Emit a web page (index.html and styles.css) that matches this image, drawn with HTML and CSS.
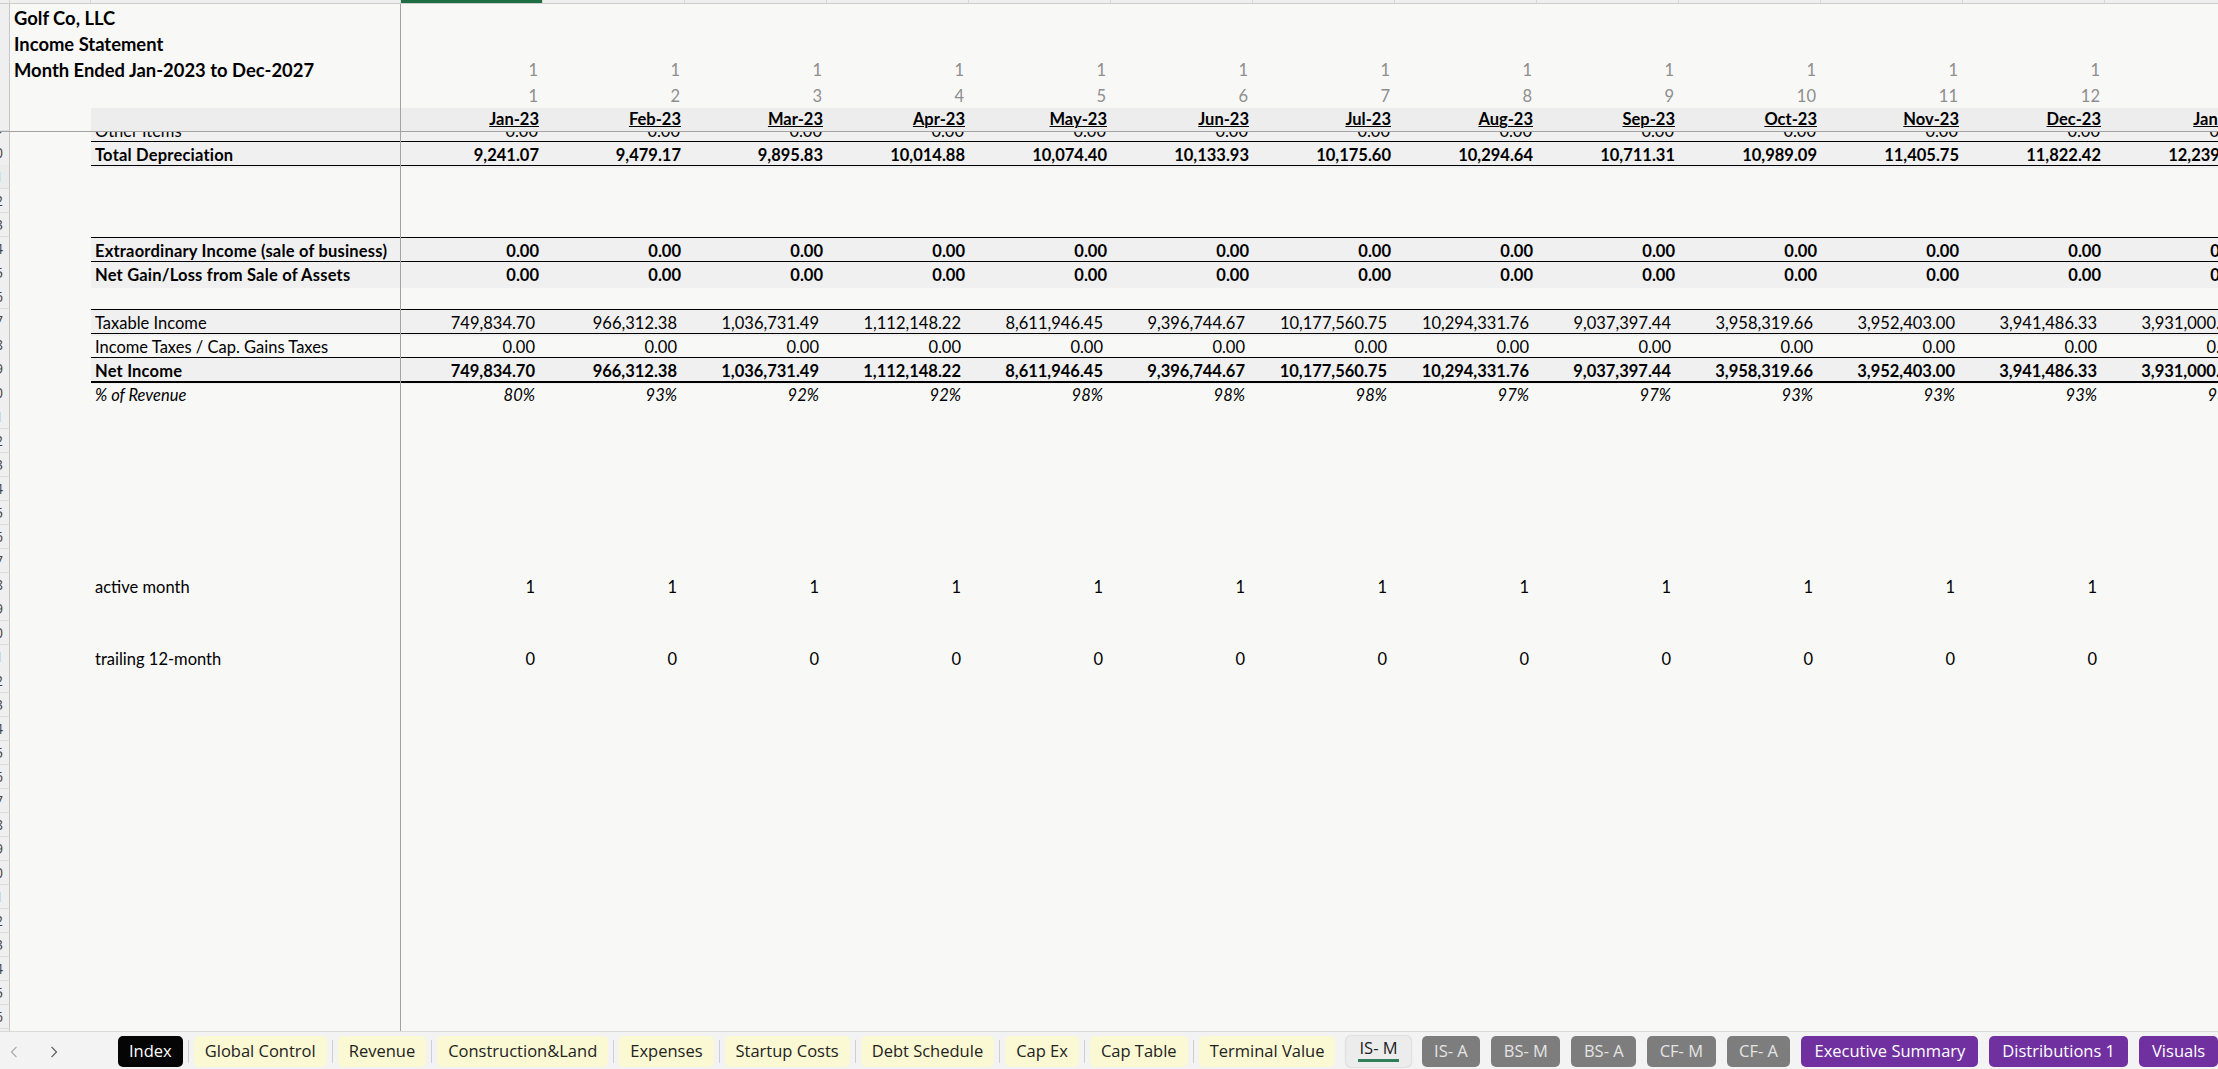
FILE: index.html
```html
<!DOCTYPE html>
<html>
<head>
<meta charset="utf-8">
<title>Golf Co, LLC - Income Statement</title>
<link rel="stylesheet" href="styles.css">
</head>
<body>
<div class="app">
  <div class="colhdr">
    <div class="ch"></div><div class="ch"></div><div class="ch"></div><div class="ch sel"></div><div class="ch"></div><div class="ch"></div><div class="ch"></div><div class="ch"></div><div class="ch"></div><div class="ch"></div><div class="ch"></div><div class="ch"></div><div class="ch"></div><div class="ch"></div><div class="ch"></div><div class="ch"></div>
  </div>
  <div class="sheet">
    <div class="top">
      <div class="row tr"><div class="rh"></div><div class="a title">Golf Co, LLC</div><div class="b"></div></div>
      <div class="row tr"><div class="rh"></div><div class="a title">Income Statement</div><div class="b"></div></div>
      <div class="row tr"><div class="rh"></div><div class="a title">Month Ended Jan-2023 to Dec-2027</div><div class="b"></div>
        <div class="g">1</div><div class="g">1</div><div class="g">1</div><div class="g">1</div><div class="g">1</div><div class="g">1</div><div class="g">1</div><div class="g">1</div><div class="g">1</div><div class="g">1</div><div class="g">1</div><div class="g">1</div><div class="g">2</div></div>
      <div class="row tr"><div class="rh"></div><div class="a"></div><div class="b"></div>
        <div class="g">1</div><div class="g">2</div><div class="g">3</div><div class="g">4</div><div class="g">5</div><div class="g">6</div><div class="g">7</div><div class="g">8</div><div class="g">9</div><div class="g">10</div><div class="g">11</div><div class="g">12</div><div class="g">1</div></div>
      <div class="row hdr bold"><div class="rh"></div><div class="a"></div><div class="b"></div>
        <div class="d u">Jan-23</div><div class="d u">Feb-23</div><div class="d u">Mar-23</div><div class="d u">Apr-23</div><div class="d u">May-23</div><div class="d u">Jun-23</div><div class="d u">Jul-23</div><div class="d u">Aug-23</div><div class="d u">Sep-23</div><div class="d u">Oct-23</div><div class="d u">Nov-23</div><div class="d u">Dec-23</div><div class="d u">Jan-24</div></div>
    </div>

    <div class="clip">
      <div class="row sh"><div class="rh">39</div><div class="a"></div><div class="b">Other Items</div>
        <div class="c">0.00</div><div class="c">0.00</div><div class="c">0.00</div><div class="c">0.00</div><div class="c">0.00</div><div class="c">0.00</div><div class="c">0.00</div><div class="c">0.00</div><div class="c">0.00</div><div class="c">0.00</div><div class="c">0.00</div><div class="c">0.00</div><div class="c">0.00</div></div>
    </div>

    <div class="row sh bt bold"><div class="rh">40</div><div class="a"></div><div class="b">Total Depreciation</div>
      <div class="d">9,241.07</div><div class="d">9,479.17</div><div class="d">9,895.83</div><div class="d">10,014.88</div><div class="d">10,074.40</div><div class="d">10,133.93</div><div class="d">10,175.60</div><div class="d">10,294.64</div><div class="d">10,711.31</div><div class="d">10,989.09</div><div class="d">11,405.75</div><div class="d">11,822.42</div><div class="d">12,239.09</div></div>
    <div class="row bt"><div class="rh hl">41</div><div class="a"></div><div class="b"></div><div class="rest"></div></div>
    <div class="row"><div class="rh">42</div><div class="a"></div><div class="b"></div></div>
    <div class="row"><div class="rh">43</div><div class="a"></div><div class="b"></div></div>
    <div class="row sh bt bold"><div class="rh">44</div><div class="a"></div><div class="b">Extraordinary Income (sale of business)</div>
      <div class="d">0.00</div><div class="d">0.00</div><div class="d">0.00</div><div class="d">0.00</div><div class="d">0.00</div><div class="d">0.00</div><div class="d">0.00</div><div class="d">0.00</div><div class="d">0.00</div><div class="d">0.00</div><div class="d">0.00</div><div class="d">0.00</div><div class="d">0.00</div></div>
    <div class="row sh bt bold"><div class="rh">45</div><div class="a"></div><div class="b">Net Gain/Loss from Sale of Assets</div>
      <div class="d">0.00</div><div class="d">0.00</div><div class="d">0.00</div><div class="d">0.00</div><div class="d">0.00</div><div class="d">0.00</div><div class="d">0.00</div><div class="d">0.00</div><div class="d">0.00</div><div class="d">0.00</div><div class="d">0.00</div><div class="d">0.00</div><div class="d">0.00</div></div>
    <div class="row"><div class="rh">46</div><div class="a"></div><div class="b"></div></div>
    <div class="row sh bt"><div class="rh">47</div><div class="a"></div><div class="b">Taxable Income</div>
      <div class="n">749,834.70</div><div class="n">966,312.38</div><div class="n">1,036,731.49</div><div class="n">1,112,148.22</div><div class="n">8,611,946.45</div><div class="n">9,396,744.67</div><div class="n">10,177,560.75</div><div class="n">10,294,331.76</div><div class="n">9,037,397.44</div><div class="n">3,958,319.66</div><div class="n">3,952,403.00</div><div class="n">3,941,486.33</div><div class="n">3,931,000.00</div></div>
    <div class="row bt"><div class="rh">48</div><div class="a"></div><div class="b">Income Taxes / Cap. Gains Taxes</div>
      <div class="n">0.00</div><div class="n">0.00</div><div class="n">0.00</div><div class="n">0.00</div><div class="n">0.00</div><div class="n">0.00</div><div class="n">0.00</div><div class="n">0.00</div><div class="n">0.00</div><div class="n">0.00</div><div class="n">0.00</div><div class="n">0.00</div><div class="n">0.00</div></div>
    <div class="row sh bt bold"><div class="rh">49</div><div class="a"></div><div class="b">Net Income</div>
      <div class="n">749,834.70</div><div class="n">966,312.38</div><div class="n">1,036,731.49</div><div class="n">1,112,148.22</div><div class="n">8,611,946.45</div><div class="n">9,396,744.67</div><div class="n">10,177,560.75</div><div class="n">10,294,331.76</div><div class="n">9,037,397.44</div><div class="n">3,958,319.66</div><div class="n">3,952,403.00</div><div class="n">3,941,486.33</div><div class="n">3,931,000.00</div></div>
    <div class="row bt2 it"><div class="rh">50</div><div class="a"></div><div class="b">% of Revenue</div>
      <div class="p">80%</div><div class="p">93%</div><div class="p">92%</div><div class="p">92%</div><div class="p">98%</div><div class="p">98%</div><div class="p">98%</div><div class="p">97%</div><div class="p">97%</div><div class="p">93%</div><div class="p">93%</div><div class="p">93%</div><div class="p">93%</div></div>
    <div class="row"><div class="rh">51</div><div class="a"></div><div class="b"></div></div>
    <div class="row"><div class="rh">52</div><div class="a"></div><div class="b"></div></div>
    <div class="row"><div class="rh">53</div><div class="a"></div><div class="b"></div></div>
    <div class="row"><div class="rh">54</div><div class="a"></div><div class="b"></div></div>
    <div class="row"><div class="rh">55</div><div class="a"></div><div class="b"></div></div>
    <div class="row"><div class="rh">56</div><div class="a"></div><div class="b"></div></div>
    <div class="row"><div class="rh">57</div><div class="a"></div><div class="b"></div></div>
    <div class="row"><div class="rh">58</div><div class="a"></div><div class="b">active month</div>
      <div class="n">1</div><div class="n">1</div><div class="n">1</div><div class="n">1</div><div class="n">1</div><div class="n">1</div><div class="n">1</div><div class="n">1</div><div class="n">1</div><div class="n">1</div><div class="n">1</div><div class="n">1</div><div class="n"></div></div>
    <div class="row"><div class="rh">59</div><div class="a"></div><div class="b"></div></div>
    <div class="row"><div class="rh">60</div><div class="a"></div><div class="b"></div></div>
    <div class="row"><div class="rh">61</div><div class="a"></div><div class="b">trailing 12-month</div>
      <div class="n">0</div><div class="n">0</div><div class="n">0</div><div class="n">0</div><div class="n">0</div><div class="n">0</div><div class="n">0</div><div class="n">0</div><div class="n">0</div><div class="n">0</div><div class="n">0</div><div class="n">0</div><div class="n"></div></div>
    <div class="row"><div class="rh">62</div><div class="a"></div><div class="b"></div></div>
    <div class="row"><div class="rh">63</div><div class="a"></div><div class="b"></div></div>
    <div class="row"><div class="rh">64</div><div class="a"></div><div class="b"></div></div>
    <div class="row"><div class="rh">65</div><div class="a"></div><div class="b"></div></div>
    <div class="row"><div class="rh">66</div><div class="a"></div><div class="b"></div></div>
    <div class="row"><div class="rh">67</div><div class="a"></div><div class="b"></div></div>
    <div class="row"><div class="rh">68</div><div class="a"></div><div class="b"></div></div>
    <div class="row"><div class="rh">69</div><div class="a"></div><div class="b"></div></div>
    <div class="row"><div class="rh">70</div><div class="a"></div><div class="b"></div></div>
    <div class="row"><div class="rh">71</div><div class="a"></div><div class="b"></div></div>
    <div class="row"><div class="rh">72</div><div class="a"></div><div class="b"></div></div>
    <div class="row"><div class="rh">73</div><div class="a"></div><div class="b"></div></div>
    <div class="row"><div class="rh">74</div><div class="a"></div><div class="b"></div></div>
    <div class="row"><div class="rh">75</div><div class="a"></div><div class="b"></div></div>
    <div class="row"><div class="rh">76</div><div class="a"></div><div class="b"></div></div>
    <div class="row"><div class="rh">77</div><div class="a"></div><div class="b"></div></div>
  </div>

  <div class="tabbar">
    <div class="nav">
      <svg class="arr" width="8" height="12" viewBox="0 0 8 12"><path d="M6.5 0.8 L1.5 6 L6.5 11.2" fill="none" stroke="#a8a8a8" stroke-width="1.2"/></svg>
      <svg class="arr arr-r" width="8" height="12" viewBox="0 0 8 12"><path d="M1.5 0.8 L6.5 6 L1.5 11.2" fill="none" stroke="#5a5a5a" stroke-width="1.2"/></svg>
    </div>
    <div class="tabs">
      <div class="tab k">Index</div><span class="sep"></span>
      <div class="tab y">Global Control</div><span class="sep"></span>
      <div class="tab y">Revenue</div><span class="sep"></span>
      <div class="tab y">Construction&amp;Land</div><span class="sep"></span>
      <div class="tab y">Expenses</div><span class="sep"></span>
      <div class="tab y">Startup Costs</div><span class="sep"></span>
      <div class="tab y">Debt Schedule</div><span class="sep"></span>
      <div class="tab y">Cap Ex</div><span class="sep"></span>
      <div class="tab y">Cap Table</div><span class="sep"></span>
      <div class="tab y">Terminal Value</div><span class="sep inv"></span>
      <div class="tab act"><span class="actlbl">IS- M</span></div><span class="sep inv"></span>
      <div class="tab gr">IS- A</div><span class="sep inv"></span>
      <div class="tab gr">BS- M</div><span class="sep inv"></span>
      <div class="tab gr">BS- A</div><span class="sep inv"></span>
      <div class="tab gr">CF- M</div><span class="sep inv"></span>
      <div class="tab gr">CF- A</div><span class="sep inv"></span>
      <div class="tab pu">Executive Summary</div><span class="sep inv"></span>
      <div class="tab pu">Distributions 1</div><span class="sep inv"></span>
      <div class="tab pu">Visuals</div>
    </div>
  </div>
</div>
</body>
</html>
```

FILE: styles.css
```css
* { box-sizing: border-box; margin: 0; padding: 0; }
html, body { width: 2218px; height: 1069px; overflow: hidden; }
body {
  background: #f8f8f7;
  font-family: Lato, "Liberation Sans", sans-serif;
  color: #000;
}
.app { display: flex; flex-direction: column; width: 2218px; height: 1069px; }

/* column header strip (mostly scrolled away) */
.colhdr {
  flex: none;
  height: 4px;
  display: grid;
  grid-template-columns: 10px 81px 310px repeat(13, 142px);
  background: #efefef;
  border-bottom: 1px solid #cdcdcd;
  overflow: hidden;
}
.ch { border-right: 1px solid #d6d6d6; }
.ch.sel { background: #1e6e43; }

/* sheet */
.sheet { flex: 1; min-height: 0; overflow: hidden; }
.top { border-bottom: 1px solid #a3a3a3; }

.row {
  display: grid;
  grid-template-columns: 10px 81px 310px repeat(13, 142px);
  height: 24px;
  font-size: 16.5px;
  line-height: 25px;
  white-space: nowrap;
}
.row > div { padding-top: 2px; }
.row.tr { height: 26px; line-height: 27px; }
.row.tr > div { padding-top: 1px; }
.row.hdr { height: 23px; line-height: 21px; }
.row.hdr > div { padding-top: 1px; }
.row.bold { font-weight: 700; }
.row.bold > .b { letter-spacing: 0.2px; }
.row.it { font-style: italic; }

.row > .rh {
  background: #efefef;
  border-right: 1px solid #c6c6c6;
  border-bottom: 1px solid #dcdcdc;
  display: flex;
  justify-content: flex-end;
  overflow: hidden;
  padding: 0 6px 0 0;
  font-family: "Open Sans", sans-serif;
  font-size: 14px;
  font-weight: 400;
  font-style: normal;
  line-height: 24px;
  color: #444;
}
.row > .rh.hl { color: #7a9c8a; background: #e9ecea; }

.a { padding-left: 4px; }
.row.tr > .a.title {
  padding-top: 0;
  font-size: 18.4px;
  font-weight: 700;
  line-height: 28px;
}
.b { padding-left: 4px; border-right: 1px solid #a3a3a3; }
.rest { grid-column: 4 / -1; }

.d { text-align: right; padding-right: 4px; }
.n { text-align: right; padding-right: 8px; }
.c { text-align: right; padding-right: 5px; }
.p { text-align: right; padding-right: 8px; }
.g { text-align: right; padding-right: 5px; color: #8e8e8e; }
.u { text-decoration: underline; text-decoration-thickness: 1px; }

.hdr > div:nth-child(n+3) { background: #ededed; }
.sh > div:nth-child(n+3) { background: #f0f0f0; }
.bt > div:nth-child(n+3) { box-shadow: inset 0 1px 0 #000; }
.bt2 > div:nth-child(n+3) { box-shadow: inset 0 2px 0 #000; }

/* frozen row that is scrolled partly out of view */
.clip { height: 9px; overflow: hidden; }
.clip .row { margin-top: -15px; }

/* sheet tab bar */
.tabbar {
  flex: none;
  height: 38px;
  border-top: 1px solid #d9d9d9;
  background: #f3f3f3;
  display: flex;
  align-items: flex-start;
  overflow: hidden;
}
.nav {
  flex: none;
  width: 118px;
  display: flex;
  align-items: center;
  height: 31px;
  margin-top: 4px;
  padding-left: 10px;
}
.arr-r { margin-left: 32px; }
.tabs {
  display: flex;
  align-items: center;
  margin-top: 4px;
  font-family: "Open Sans", sans-serif;
  font-size: 16.5px;
  white-space: nowrap;
}
.tab {
  height: 31px;
  line-height: 30px;
  padding: 0 11px;
  border-radius: 5px;
  color: #222;
}
.tab.k { background: #050505; color: #fff; }
.tab.y { background: #fbf9d3; }
.tab.gr { background: #7d7d7d; color: #e4e4e4; padding: 0 12.5px; }
.tab.pu { background: #7030a0; color: #fff; padding: 0 13px; }
.tab.act {
  background: #ececec;
  box-shadow: 0 0 2px rgba(0, 0, 0, 0.28);
  line-height: 24px;
  padding: 0 12px;
}
.actlbl {
  display: inline-block;
  border-bottom: 3px solid #2f7f59;
  line-height: 22px;
  padding: 0 1px;
}
.sep {
  flex: none;
  width: 1px;
  height: 23px;
  margin: 0 5px;
  background: #cfcfcf;
}
.sep.inv { background: transparent; }
```
